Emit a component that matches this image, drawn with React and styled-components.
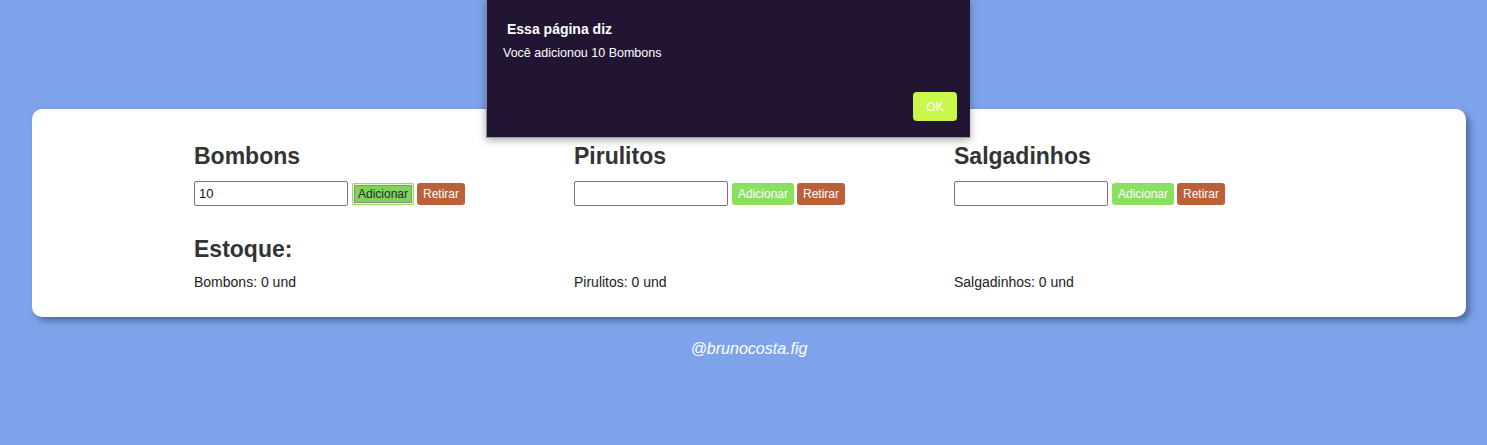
import React, {useState} from 'react';
import styled, {createGlobalStyle} from "styled-components";

const GlobalStyle = createGlobalStyle`
body {
  margin: 0;
  background-color: #7ea3eb;
  font-family: "Liberation Sans", Arial, sans-serif;
}
`;

const Page = styled.div`
padding: 109px 21px 0 32px;
`;

const Card = styled.div`
background-color: #fff;
border-radius: 10px;
box-shadow: 4px 4px 6px rgba(40, 60, 110, 0.55);
padding: 34px 0 27px 162px;
`;

const Grid = styled.div`
display: grid;
grid-template-columns: repeat(3, 380px);
`;

const Product = styled.div`
display: flex;
flex-direction: column;
`;

const Title = styled.h2`
margin: 0;
font-size: 23px;
line-height: 26px;
font-weight: 700;
color: #333;
`;

const Controls = styled.div`
display: flex;
align-items: center;
margin-top: 12px;
`;

const Input = styled.input`
box-sizing: border-box;
width: 154px;
height: 25px;
border: 1px solid #767676;
border-radius: 2px;
padding: 0 4px;
font-family: "Liberation Sans", Arial, sans-serif;
font-size: 13px;
color: #111;
margin-right: 4px;
outline: none;
`;

const Button = styled.button`
box-sizing: border-box;
height: 22px;
padding: 0 6px;
border: none;
border-radius: 3px;
font-family: "Liberation Sans", Arial, sans-serif;
font-size: 12px;
color: ${p => p.$focused ? "#2a2a2a" : "#fff"};
background-color: ${p => p.$bg};
box-shadow: ${p => p.$focused ? "inset 0 0 0 1px #8ae05f, inset 0 0 0 2px #e4f6da, inset 0 0 0 3px #8c8c8c" : "none"};
margin-right: 3px;
cursor: pointer;
`;

const StockTitle = styled(Title)`
grid-column: 1 / -1;
margin-top: 30px;
`;

const StockText = styled.p`
margin: 12px 0 0;
font-size: 14px;
line-height: 16px;
color: #222;
`;

const Footer = styled.p`
margin: 23px 21px 0 32px;
text-align: center;
font-style: italic;
font-size: 16px;
line-height: 18px;
color: #fff;
`;

const Alert = styled.div`
position: absolute;
top: 0;
left: 486px;
width: 484px;
height: 138px;
box-sizing: border-box;
background-color: #221433;
border-left: 1px solid #8a8a96;
border-bottom: 1px solid #9a9aa4;
box-shadow: 0 2px 8px rgba(0, 0, 0, 0.35);
padding: 21px 13px 16px 16px;
display: flex;
flex-direction: column;
color: #fff;
`;

const AlertTitle = styled.div`
font-weight: 700;
font-size: 14px;
line-height: 17px;
padding-left: 4px;
`;

const AlertText = styled.div`
font-size: 12.5px;
line-height: 15px;
margin-top: 8px;
`;

const AlertFooter = styled.div`
margin-top: auto;
display: flex;
justify-content: flex-end;
`;

const OkButton = styled.button`
width: 44px;
height: 29px;
border: none;
border-radius: 4px;
background-color: #c9f74c;
color: #fff;
font-family: "Liberation Sans", Arial, sans-serif;
font-size: 12px;
`;

const products = ["Bombons", "Pirulitos", "Salgadinhos"];

export default function App () {
  const [values, setValues] = useState({Bombons: "10", Pirulitos: "", Salgadinhos: ""})

  return (
    <>
      <GlobalStyle />
      <Page>
        <Card>
          <Grid>
            {products.map(name => (
              <Product key={name}>
                <Title>{name}</Title>
                <Controls>
                  <Input value={values[name]} onChange={e => setValues({...values, [name]: e.target.value})} />
                  <Button $bg={name === "Bombons" ? "#7fd35c" : "#8ae05f"} $focused={name === "Bombons"}>Adicionar</Button>
                  <Button $bg="#bc603a">Retirar</Button>
                </Controls>
              </Product>
            ))}
            <StockTitle>Estoque:</StockTitle>
            {products.map(name => (
              <StockText key={name}>{name}: 0 und</StockText>
            ))}
          </Grid>
        </Card>
      </Page>
      <Footer>@brunocosta.fig</Footer>
      <Alert>
        <AlertTitle>Essa página diz</AlertTitle>
        <AlertText>Você adicionou 10 Bombons</AlertText>
        <AlertFooter>
          <OkButton>OK</OkButton>
        </AlertFooter>
      </Alert>
    </>
  );
}
